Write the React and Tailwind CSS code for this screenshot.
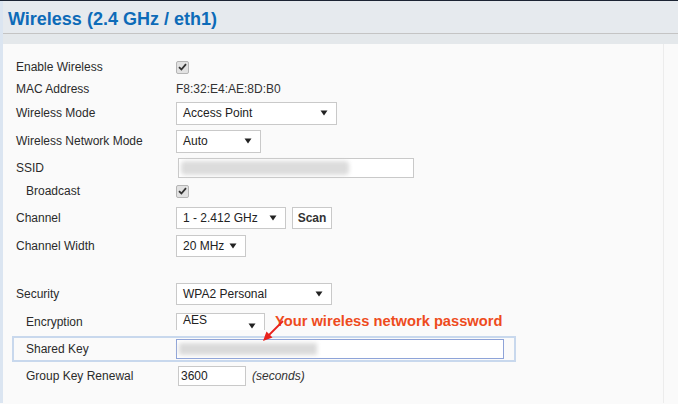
import React from "react";

const Check = () => (
  <div className="w-[13px] h-[13px] rounded-[2px] border border-[#b5b5b5] bg-[#e2e2e2] flex items-center justify-center">
    <svg width="9" height="8" viewBox="0 0 9 8">
      <path d="M1 4.2 L3.4 6.5 L8 1.2" fill="none" stroke="#333" strokeWidth="1.8" />
    </svg>
  </div>
);

const Arrow = () => (
  <svg width="8" height="6" viewBox="0 0 8 6" className="shrink-0">
    <path d="M0.5 0.5 L7.5 0.5 L4 5.5 Z" fill="#222" />
  </svg>
);

const Select = ({ w, h = 23, text, extra = "" }) => (
  <div
    className={`flex items-center justify-between border border-[#c9c9c9] bg-white pl-[6px] pr-[8px] text-[12px] text-[#222] ${extra}`}
    style={{ width: w, height: h }}
  >
    <span>{text}</span>
    <Arrow />
  </div>
);

const Row = ({ h, label, indent, children }) => (
  <div className="flex items-center" style={{ height: h }}>
    <div className={`w-[176px] shrink-0 ${indent ? "pl-[26px]" : "pl-[16px]"}`}>{label}</div>
    {children}
  </div>
);

export default function App() {
  return (
    <div
      className="w-[678px] h-[404px] overflow-hidden bg-[#fafafa] text-[12px] text-[#2b2b2b] relative"
      style={{ fontFamily: '"Liberation Sans", Arial, sans-serif' }}
    >
      <div className="h-[1px] bg-[#1c2433]" />
      <div className="flex">
        <div className="w-[3px] bg-[#dbe5f1] shrink-0" />
        <div className="flex-1">
          <div className="h-[32px] bg-[#e6eaee] flex items-center pl-[5px] pt-[3px]">
            <span className="text-[18px] font-bold text-[#0d6bb8] leading-none">Wireless (2.4 GHz / eth1)</span>
          </div>
          <div className="h-[1px] bg-[#c4c4c4]" />
          <div className="h-[10px] bg-[#e4e8eb]" />
          <div className="flex">
            <div className="flex-1 h-[359px] relative">
              <div className="h-[12px]" />
              <div className="-ml-[3px]">
                <Row h={22} label="Enable Wireless"><Check /></Row>
                <Row h={22} label="MAC Address"><span className="text-[#333]">F8:32:E4:AE:8D:B0</span></Row>
                <Row h={26} label="Wireless Mode"><Select w={161} text="Access Point" /></Row>
                <Row h={30} label="Wireless Network Mode"><Select w={85} text="Auto" /></Row>
                <Row h={24} label="SSID">
                  <div className="ml-[2px] w-[236px] h-[20px] border border-[#c9c9c9] bg-white flex items-center px-[2px]">
                    <div className="w-[168px] h-[14px] bg-[#dcdcdc] blur-[2px] rounded-sm" />
                  </div>
                </Row>
                <Row h={22} label="Broadcast" indent><Check /></Row>
                <Row h={32} label="Channel">
                  <Select w={110} h={22} text="1 - 2.412 GHz" />
                  <div className="ml-[6px] w-[40px] h-[22px] border border-[#c9c9c9] bg-white flex items-center justify-center font-bold text-[12px] text-[#333]">Scan</div>
                </Row>
                <Row h={24} label="Channel Width"><Select w={70} h={22} text="20 MHz" /></Row>
                <div className="h-[22px]" />
                <Row h={28} label="Security"><Select w={156} h={22} text="WPA2 Personal" /></Row>
                <Row h={28} label="Encryption" indent>
                  <div className="self-end mb-[6px]">
                    <Select w={89} h={17} text="AES" extra="border-b-0 items-end pb-[1px]" />
                  </div>
                  <span className="ml-[10px] -mt-[2px] text-[14.7px] font-bold text-[#ee4b1d]">Your wireless network password</span>
                </Row>
                <div className="ml-[12px] w-[504px] h-[26px] border-2 border-[#c8d8ed] flex items-center">
                  <div className="w-[162px] pl-[12px] shrink-0">Shared Key</div>
                  <div className="w-[328px] h-[20px] border border-[#8ea3d8] bg-white flex items-center px-[2px]">
                    <div className="w-[138px] h-[12px] bg-[#dadada] blur-[2px]" />
                  </div>
                </div>
                <Row h={28} label="Group Key Renewal" indent>
                  <div className="ml-[2px] w-[68px] h-[20px] border border-[#c9c9c9] bg-white flex items-center px-[2px] text-[12px] text-[#222]">3600</div>
                  <span className="ml-[6px] italic text-[#333]">(seconds)</span>
                </Row>
              </div>
              <svg className="absolute" style={{ left: 255, top: 276 }} width="30" height="24" viewBox="0 0 30 24">
                <path d="M25 1 L10 16" stroke="#e8211c" strokeWidth="1.8" fill="none" />
                <path d="M5 21 L8.5 11.5 L14.5 17.5 Z" fill="#e8211c" />
              </svg>
            </div>
            <div className="w-[1px] bg-[#ececec]" />
            <div className="w-[14px]" />
          </div>
        </div>
      </div>
    </div>
  );
}
